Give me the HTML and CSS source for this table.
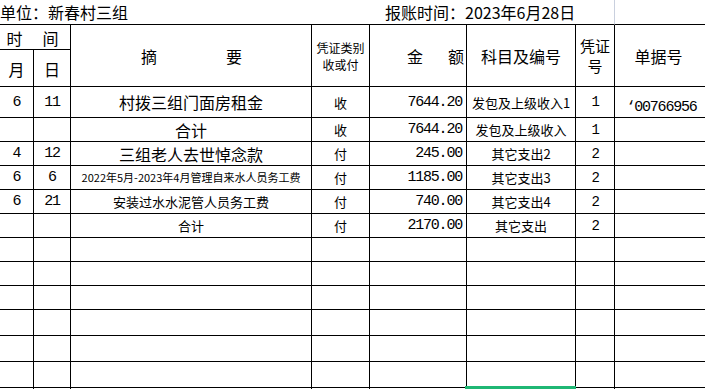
FILE: index.html
```html
<!DOCTYPE html>
<html lang="zh-CN">
<head>
<meta charset="utf-8">
<title>报账单</title>
<link rel="stylesheet" href="styles.css">
</head>
<body>
<div class="sheet">
  <div class="c t-unit">单位：新春村三组</div>
  <div class="c t-date">报账时间：2023年6月28日</div>
  <div class="c t-rest"></div>

  <div class="c h-time"><span>时</span><span>间</span></div>
  <div class="c h2 h-abs"><span>摘</span><span>要</span></div>
  <div class="c h2 h-type">凭证类别<br>收或付</div>
  <div class="c h2 h-amt"><span>金</span><span>额</span></div>
  <div class="c h2 h-subj">科目及编号</div>
  <div class="c h2 h-vno">凭证<br>号</div>
  <div class="c h2 h-bill">单据号</div>
  <div class="c h-md">月</div>
  <div class="c h-md">日</div>

  <div class="c n">6</div><div class="c n">11</div><div class="c big">村拨三组门面房租金</div><div class="c s">收</div><div class="c n amt">7644.20</div><div class="c s">发包及上级收入1</div><div class="c n sm">1</div><div class="c n bill">‘00766956</div>
  <div class="c"></div><div class="c"></div><div class="c big">合计</div><div class="c s">收</div><div class="c n amt">7644.20</div><div class="c s">发包及上级收入</div><div class="c n sm">1</div><div class="c"></div>
  <div class="c n">4</div><div class="c n">12</div><div class="c big">三组老人去世悼念款</div><div class="c s">付</div><div class="c n amt">245.00</div><div class="c s">其它支出2</div><div class="c n sm">2</div><div class="c"></div>
  <div class="c n">6</div><div class="c n">6</div><div class="c xs">2022年5月-2023年4月管理自来水人员务工费</div><div class="c s">付</div><div class="c n amt">1185.00</div><div class="c s">其它支出3</div><div class="c n sm">2</div><div class="c"></div>
  <div class="c n">6</div><div class="c n">21</div><div class="c s">安装过水水泥管人员务工费</div><div class="c s">付</div><div class="c n amt">740.00</div><div class="c s">其它支出4</div><div class="c n sm">2</div><div class="c"></div>
  <div class="c"></div><div class="c"></div><div class="c s">合计</div><div class="c s">付</div><div class="c n amt">2170.00</div><div class="c s">其它支出</div><div class="c n sm">2</div><div class="c"></div>

  <div class="c"></div><div class="c"></div><div class="c"></div><div class="c"></div><div class="c"></div><div class="c"></div><div class="c"></div><div class="c"></div>
  <div class="c"></div><div class="c"></div><div class="c"></div><div class="c"></div><div class="c"></div><div class="c"></div><div class="c"></div><div class="c"></div>
  <div class="c"></div><div class="c"></div><div class="c"></div><div class="c"></div><div class="c"></div><div class="c"></div><div class="c"></div><div class="c"></div>
  <div class="c"></div><div class="c"></div><div class="c"></div><div class="c"></div><div class="c"></div><div class="c"></div><div class="c"></div><div class="c"></div>
  <div class="c"></div><div class="c"></div><div class="c"></div><div class="c"></div><div class="c"></div><div class="c"></div><div class="c"></div><div class="c"></div>
  <div class="c"></div><div class="c"></div><div class="c"></div><div class="c"></div><div class="c"></div><div class="c"></div><div class="c"></div><div class="c"></div>
  <div class="c"></div><div class="c"></div><div class="c"></div><div class="c"></div><div class="c"></div><div class="c selected"></div><div class="c"></div><div class="c"></div>
</div>
</body>
</html>
```

FILE: styles.css
```css
html, body {
  margin: 0;
  padding: 0;
  background: #fff;
  overflow: hidden;
}
body {
  width: 705px;
  height: 389px;
  font-family: "Noto Sans CJK SC", "Noto Sans CJK JP", sans-serif;
  color: #000;
}
.sheet {
  display: grid;
  grid-template-columns: 34px 37px 241px 58px 97px 109px 39px 100px;
  grid-template-rows: 25px 25px 37px 31px repeat(8, 24px) repeat(4, 26px);
  width: 715px;
}
.c {
  box-sizing: border-box;
  border-right: 1px solid #000;
  border-bottom: 1px solid #000;
  display: flex;
  align-items: center;
  justify-content: center;
  text-align: center;
  white-space: nowrap;
  overflow: visible;
  font-size: 13px;
  line-height: 1;
}
.t-unit {
  grid-column: 1 / 5;
  border-right: none;
  justify-content: flex-start;
  font-size: 16px;
  padding-bottom: 1px;
}
.t-date {
  grid-column: 5 / 8;
  border-right: 1px solid #c9d0de;
  justify-content: flex-start;
  padding-left: 15px;
  font-size: 16px;
  padding-bottom: 1px;
}
.t-rest {
  border-right: none;
}
.h-time {
  grid-column: 1 / 3;
  font-size: 16px;
  gap: 20px;
  padding-right: 5px;
  padding-top: 2px;
}
.h2 {
  grid-row: span 2;
}
.h-abs {
  font-size: 16px;
  gap: 69px;
  padding-left: 1px;
}
.h-type {
  font-size: 12px;
  line-height: 17px;
}
.h-amt {
  font-size: 16px;
  justify-content: flex-end;
  gap: 25px;
  padding-right: 2px;
}
.h-subj {
  font-size: 16px;
}
.h-vno {
  font-size: 15px;
  line-height: 20px;
  padding-top: 1px;
}
.h-bill {
  font-size: 16px;
  padding-right: 12px;
}
.h-md {
  font-size: 16px;
  padding-top: 2px;
}
.big {
  font-size: 16px;
}
.s {
  font-size: 13px;
}
.xs {
  font-size: 11px;
}
.n {
  font-family: "Liberation Mono", "DejaVu Sans Mono", monospace;
  font-size: 15px;
  letter-spacing: -1.2px;
}
.sm {
  font-size: 14px;
}
.amt {
  justify-content: flex-end;
  padding-right: 4px;
}
.bill {
  padding-right: 6px;
  padding-top: 10px;
}
.selected {
  position: relative;
}
.selected::before {
  content: "";
  position: absolute;
  top: -2px;
  left: -2px;
  right: -1px;
  height: 3px;
  background: #1fb774;
}
```
